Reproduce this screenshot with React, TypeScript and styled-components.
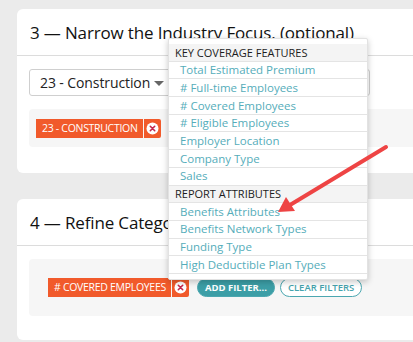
import React from "react";
import styled, { createGlobalStyle } from "styled-components";

const GlobalStyle = createGlobalStyle`
  html, body {
    margin: 0;
    padding: 0;
    background: #ebebeb;
    overflow: hidden;
  }
  body {
    font-family: "Open Sans", "Liberation Sans", sans-serif;
    color: #222;
  }
`;

const Page = styled.div`
  position: relative;
  width: 480px;
  height: 342px;
  padding: 9px 0 0 17px;
  box-sizing: border-box;
  display: flex;
  flex-direction: column;
  gap: 26px;
`;

const Card = styled.section`
  background: #fff;
  border-radius: 6px;
  overflow: hidden;
  flex-shrink: 0;
`;

const CardHeader = styled.header`
  height: 47px;
  border-bottom: 1px solid #dcdcdc;
  display: flex;
  align-items: center;
  padding: 1px 0 0 13px;
  box-sizing: border-box;
`;

const Title = styled.h2`
  margin: 0;
  font-size: 17px;
  letter-spacing: -0.15px;
  font-weight: 400;
  color: #111;
  white-space: nowrap;
`;

const CardBody = styled.div<{ $bottom: number }>`
  padding: 13px 12px ${(p) => p.$bottom}px;
  display: flex;
  flex-direction: column;
  gap: 13px;
`;

const Select = styled.div`
  width: 341px;
  height: 27px;
  box-sizing: border-box;
  border: 1px solid #cfcfcf;
  border-radius: 3px;
  display: flex;
  align-items: center;
  padding-left: 10px;
  gap: 4px;
  font-size: 14px;
  letter-spacing: -0.1px;
  color: #222;
`;

const Caret = styled.span`
  width: 0;
  height: 0;
  border-left: 5px solid transparent;
  border-right: 5px solid transparent;
  border-top: 5px solid #666;
  margin-top: 1px;
`;

const TagPanel = styled.div<{ $pad: string }>`
  background: #f6f6f6;
  border-radius: 4px;
  padding: ${(p) => p.$pad};
  display: flex;
  align-items: center;
`;

const Tag = styled.span`
  background: #f15a2b;
  color: #fff;
  font-size: 10.5px;
  letter-spacing: -0.3px;
  height: 19px;
  line-height: 19px;
  padding: 0 5px 0 6px;
  text-transform: uppercase;
  white-space: nowrap;
`;

const RemoveBtn = styled.span`
  width: 17px;
  height: 19px;
  background: #f15a2b;
  margin-left: 1px;
  display: flex;
  align-items: center;
  justify-content: center;
  border-radius: 0 2px 2px 0;
`;

const PillButton = styled.button<{ $solid?: boolean }>`
  height: 19px;
  box-sizing: border-box;
  border-radius: 10px;
  border: 1px solid #4ba7b0;
  background: ${(p) => (p.$solid ? "#3c9ea6" : "#fff")};
  color: ${(p) => (p.$solid ? "#fff" : "#45a3ad")};
  font-family: inherit;
  font-size: 9.5px;
  font-weight: ${(p) => (p.$solid ? 700 : 600)};
  padding: 0 7px;
  margin-left: ${(p) => (p.$solid ? 8 : 5)}px;
  white-space: nowrap;
  text-transform: uppercase;
`;

const Menu = styled.ul`
  position: absolute;
  left: 168px;
  top: 38px;
  width: 200px;
  margin: 0;
  padding: 5px 0;
  list-style: none;
  background: #fff;
  border: 1px solid #e2e2e2;
  border-radius: 2px;
  box-shadow: 0 2px 6px rgba(0, 0, 0, 0.22);
  box-sizing: border-box;
`;

const MenuItem = styled.li<{ $header?: boolean }>`
  height: 17.7px;
  box-sizing: border-box;
  display: flex;
  align-items: center;
  line-height: 1.2;
  border-bottom: 1px solid #e4e4e4;
  font-size: ${(p) => (p.$header ? 11 : 11.5)}px;
  padding-left: ${(p) => (p.$header ? 6 : 11)}px;
  background: ${(p) => (p.$header ? "#f4f4f4" : "#fff")};
  color: ${(p) => (p.$header ? "#1d1d1d" : "#55adba")};
  white-space: nowrap;
`;

const Arrow = styled.svg`
  position: absolute;
  left: 270px;
  top: 140px;
`;

const XIcon = () => (
  <svg width="13" height="13" viewBox="0 0 13 13">
    <circle cx="6.5" cy="6.5" r="6" fill="#fff" />
    <path d="M4.3 4.3 L8.7 8.7 M8.7 4.3 L4.3 8.7" stroke="#c4264d" strokeWidth="1.6" strokeLinecap="round" />
  </svg>
);

const menu: { label: string; header?: boolean }[] = [
  { label: "KEY COVERAGE FEATURES", header: true },
  { label: "Total Estimated Premium" },
  { label: "# Full-time Employees" },
  { label: "# Covered Employees" },
  { label: "# Eligible Employees" },
  { label: "Employer Location" },
  { label: "Company Type" },
  { label: "Sales" },
  { label: "REPORT ATTRIBUTES", header: true },
  { label: "Benefits Attributes" },
  { label: "Benefits Network Types" },
  { label: "Funding Type" },
  { label: "High Deductible Plan Types" },
];

export default function App() {
  return (
    <>
      <GlobalStyle />
      <Page>
        <Card>
          <CardHeader>
            <Title>3 — Narrow the Industry Focus. (optional)</Title>
          </CardHeader>
          <CardBody $bottom={26}>
            <Select>
              23 - Construction
              <Caret />
            </Select>
            <TagPanel $pad="10px 7px 9px">
              <Tag>23 - Construction</Tag>
              <RemoveBtn>
                <XIcon />
              </RemoveBtn>
            </TagPanel>
          </CardBody>
        </Card>
        <Card>
          <CardHeader>
            <Title>4 — Refine Categories</Title>
          </CardHeader>
          <CardBody $bottom={24}>
            <TagPanel $pad="19px 19px">
              <Tag># Covered Employees</Tag>
              <RemoveBtn>
                <XIcon />
              </RemoveBtn>
              <PillButton $solid>Add Filter...</PillButton>
              <PillButton>Clear Filters</PillButton>
            </TagPanel>
          </CardBody>
        </Card>

        <Menu>
          {menu.map((m) => (
            <MenuItem key={m.label} $header={m.header}>
              {m.label}
            </MenuItem>
          ))}
        </Menu>

        <Arrow width="125" height="80" viewBox="0 0 125 80">
          <line x1="116" y1="7" x2="20" y2="65" stroke="#ee4444" strokeWidth="4" strokeLinecap="round" />
          <polygon points="8,72 16,57 25,71" fill="#ee4444" />
        </Arrow>
      </Page>
    </>
  );
}
